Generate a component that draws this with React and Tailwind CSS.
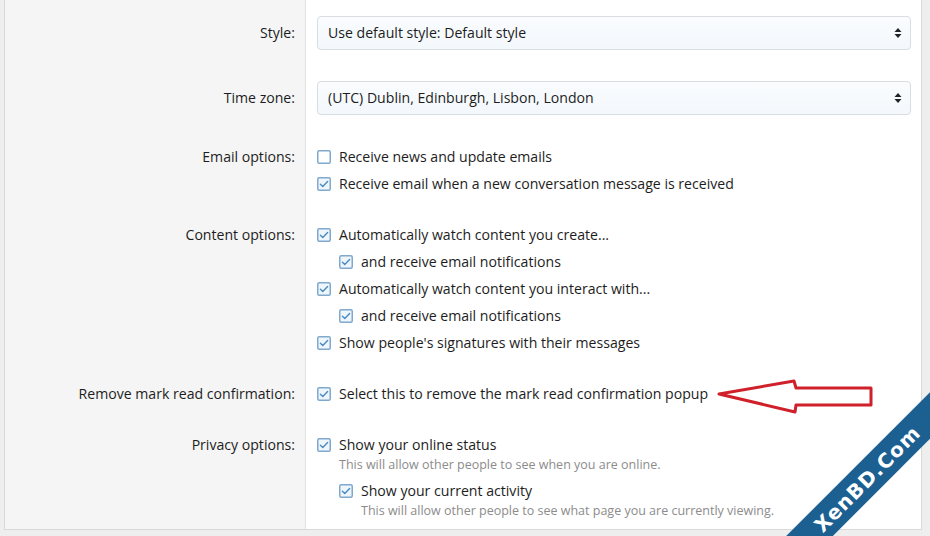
import React from 'react'

const font = { fontFamily: '"Open Sans", "Noto Sans", sans-serif' }

function Box({ checked }) {
  return (
    <svg width="14" height="14" viewBox="0 0 14 14" className="shrink-0">
      <rect x="0.75" y="0.75" width="12.5" height="12.5" rx="1.5" fill={checked ? '#eef5fb' : '#ffffff'} stroke="#7fa9cd" strokeWidth="1.5" />
      {checked && <path d="M3.4 7.2 L5.8 9.4 L10.6 4.6" fill="none" stroke="#4a8bc2" strokeWidth="1.4" strokeLinecap="round" strokeLinejoin="round" />}
    </svg>
  )
}

function Check({ checked = true, label, nested }) {
  return (
    <div className={`flex items-center h-[27px] gap-[8px] ${nested ? 'pl-[22px]' : ''}`}>
      <Box checked={checked} />
      <span>{label}</span>
    </div>
  )
}

function Hint({ children, nested }) {
  return (
    <div className={`text-[12.5px] leading-[14px] text-[#8c8c8c] ${nested ? 'pl-[44px]' : 'pl-[22px]'}`}>{children}</div>
  )
}

function Select({ value }) {
  return (
    <div className="flex items-center h-[34px] rounded-[4px] border border-[#d8dde2] bg-gradient-to-b from-[#fafcfe] to-[#f3f8fc] pl-[10px] pr-[8px]">
      <span className="flex-1">{value}</span>
      <svg width="8" height="12" viewBox="0 0 8 12">
        <path d="M4 1 L7.5 5 L0.5 5 Z" fill="#222" />
        <path d="M4 11 L7.5 7 L0.5 7 Z" fill="#222" />
      </svg>
    </div>
  )
}

function Row({ label, children, pad, grow }) {
  return (
    <div className={`flex ${grow ? 'flex-1' : ''}`}>
      <div className={`w-[301px] shrink-0 bg-[#f5f5f5] border-r border-[#e2e2e2] pr-[10px] text-right ${pad}`}>{label}</div>
      <div className={`flex-1 pl-[11px] pr-[10px] ${pad}`}>{children}</div>
    </div>
  )
}

export default function App() {
  return (
    <div className="relative w-[930px] h-[536px] overflow-hidden bg-[#eeeeee] text-[14.1px] text-[#1d1d1d]" style={font}>
      <div className="ml-[4px] mr-[8px] h-[530px] border-l border-r border-b border-[#d9d9d9] bg-white flex flex-col">
        <Row pad="pt-[16px]" label={<div className="h-[34px] flex items-center justify-end">Style:</div>}>
          <Select value="Use default style: Default style" />
        </Row>
        <Row pad="pt-[31px]" label={<div className="h-[34px] flex items-center justify-end">Time zone:</div>}>
          <Select value="(UTC) Dublin, Edinburgh, Lisbon, London" />
        </Row>
        <Row pad="pt-[28px]" label={<div className="leading-[27px]">Email options:</div>}>
          <Check checked={false} label="Receive news and update emails" />
          <Check label="Receive email when a new conversation message is received" />
        </Row>
        <Row pad="pt-[24px]" label={<div className="leading-[27px]">Content options:</div>}>
          <Check label="Automatically watch content you create..." />
          <Check nested label="and receive email notifications" />
          <Check label="Automatically watch content you interact with..." />
          <Check nested label="and receive email notifications" />
          <Check label="Show people's signatures with their messages" />
        </Row>
        <Row pad="pt-[24px]" label={<div className="leading-[27px]">Remove mark read confirmation:</div>}>
          <Check label="Select this to remove the mark read confirmation popup" />
        </Row>
        <Row pad="pt-[24px]" grow label={<div className="leading-[27px]">Privacy options:</div>}>
          <Check label="Show your online status" />
          <Hint>This will allow other people to see when you are online.</Hint>
          <div className="mt-[5px]">
            <Check nested label="Show your current activity" />
          </div>
          <Hint nested>This will allow other people to see what page you are currently viewing.</Hint>
        </Row>
      </div>

      {/* red arrow annotation */}
      <svg className="absolute left-[714px] top-[376px]" width="164" height="40" viewBox="0 0 164 40">
        <path d="M5 18 L80 5 L82 12 L157 12 L157 29 L82 29 L81 36 Z" fill="none" stroke="#d0202a" strokeWidth="3" strokeLinejoin="round" />
      </svg>

      {/* watermark ribbon */}
      <div className="absolute left-[717px] top-[462px] w-[300px] h-[33px] bg-[#1c5f91] -rotate-45 origin-center flex items-center justify-center">
        <span className="text-white text-[20px] font-bold tracking-[1px]" style={{ fontFamily: '"DejaVu Sans", sans-serif' }}>XenBD.Com</span>
      </div>
    </div>
  )
}
